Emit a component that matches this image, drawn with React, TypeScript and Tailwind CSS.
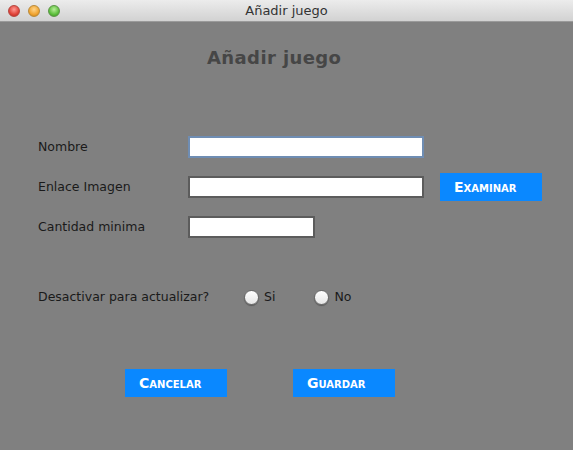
export default function App() {
  return (
    <div className="w-[573px] h-[450px] flex flex-col bg-[#808080] font-['Lucida_Grande','DejaVu_Sans',sans-serif] text-[#1a1a1a]">
      {/* barra de titulo */}
      <div className="h-[22px] flex items-center relative bg-gradient-to-b from-[#ececec] to-[#d2d2d2] border-b border-[#9a9a9a]">
        <div className="flex items-center gap-[8px] pl-[8px]">
          <span className="w-[12px] h-[12px] rounded-full bg-[radial-gradient(circle_at_50%_35%,#ff9a94,#e0443a_60%,#b3261e)] border border-[#b5463f]" />
          <span className="w-[12px] h-[12px] rounded-full bg-[radial-gradient(circle_at_50%_35%,#ffd58a,#f0a431_60%,#c07a10)] border border-[#b98a3a]" />
          <span className="w-[12px] h-[12px] rounded-full bg-[radial-gradient(circle_at_50%_35%,#b8ee9a,#5cbf3c_60%,#3a8d22)] border border-[#5b9447]" />
        </div>
        <span className="absolute left-0 right-0 text-center text-[13px] text-[#333] pointer-events-none">Añadir juego</span>
      </div>

      <div className="flex-1 flex flex-col">
        <h1 className="mt-[22px] pl-[207px] text-[18px] font-bold text-[#464646] tracking-[0.4px]">Añadir juego</h1>

        <div className="mt-[65px] pl-[38px] flex flex-col text-[12.5px]">
          <div className="flex items-center h-[22px]">
            <span className="w-[150px]">Nombre</span>
            <div className="w-[236px] h-[22px] bg-white border-2 border-[#6f8db3]" />
          </div>
          <div className="flex items-center h-[28px] mt-[15px]">
            <span className="w-[150px]">Enlace Imagen</span>
            <div className="w-[236px] h-[22px] bg-white border-2 border-[#5c5c5c]" />
            <Boton texto="Examinar" className="ml-[16px]" />
          </div>
          <div className="flex items-center h-[22px] mt-[15px]">
            <span className="w-[150px]">Cantidad minima</span>
            <div className="w-[127px] h-[22px] bg-white border-2 border-[#5c5c5c]" />
          </div>

          <div className="flex items-center mt-[49px] h-[20px]">
            <span className="w-[206px]">Desactivar para actualizar?</span>
            <Radio texto="Si" />
            <span className="w-[39px]" />
            <Radio texto="No" />
          </div>
        </div>

        <div className="mt-[62px] flex gap-[66px] pl-[125px]">
          <Boton texto="Cancelar" />
          <Boton texto="Guardar" />
        </div>
      </div>
    </div>
  );
}

function Boton({ texto, className = '' }: { texto: string; className?: string }) {
  return (
    <div className={`w-[102px] h-[28px] bg-[#0a88ff] flex items-center pl-[14px] text-white font-bold text-[14px] [font-variant:small-caps] font-['DejaVu_Sans',sans-serif] ${className}`}>
      {texto}
    </div>
  );
}

function Radio({ texto }: { texto: string }) {
  return (
    <div className="flex items-center gap-[5px]">
      <span className="w-[15px] h-[15px] rounded-full border border-[#6a6a6a] bg-gradient-to-b from-white to-[#e6e6e6] shadow-[0_1px_1px_rgba(0,0,0,0.3)]" />
      <span>{texto}</span>
    </div>
  );
}
